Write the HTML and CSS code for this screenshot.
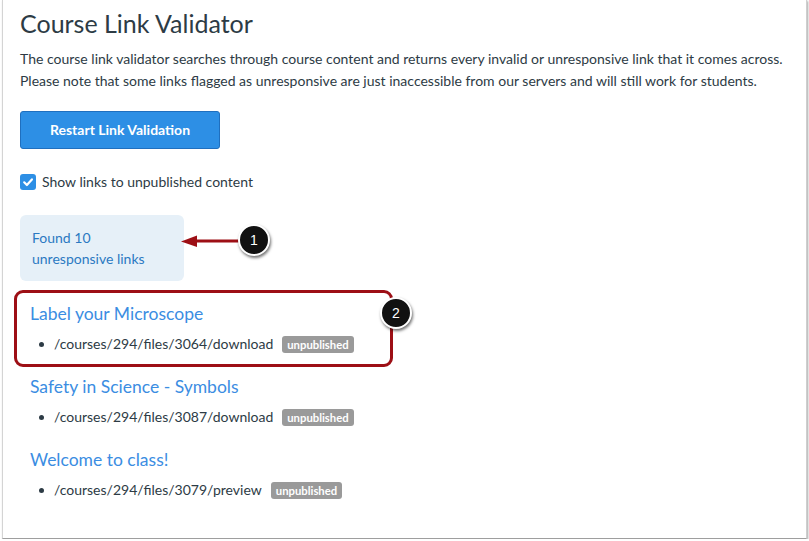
FILE: index.html
```html
<!DOCTYPE html>
<html lang="en">
<head>
<meta charset="utf-8">
<title>Course Link Validator</title>
<link rel="stylesheet" href="styles.css">
</head>
<body>
<div class="frame">
  <h1 class="title">Course Link Validator</h1>
  <p class="intro">The course link validator searches through course content and returns every invalid or unresponsive link that it comes across. Please note that some links flagged as unresponsive are just inaccessible from our servers and will still work for students.</p>
  <button class="btn" type="button">Restart Link Validation</button>
  <label class="check-row">
    <span class="checkbox"><svg viewBox="0 0 16 16" width="16" height="16"><path d="M4.2 8.3 L6.9 11 L11.9 5.4" fill="none" stroke="#fff" stroke-width="2.2" stroke-linecap="round" stroke-linejoin="round"/></svg></span>
    <span class="check-label">Show links to unpublished content</span>
  </label>
  <div class="found">Found 10<br>unresponsive links</div>

  <div class="results">
    <section class="group group-highlight">
      <a class="group-title" href="#">Label your Microscope</a>
      <ul class="links">
        <li><span class="path">/courses/294/files/3064/download</span><span class="badge">unpublished</span></li>
      </ul>
    </section>
    <section class="group">
      <a class="group-title" href="#">Safety in Science - Symbols</a>
      <ul class="links">
        <li><span class="path">/courses/294/files/3087/download</span><span class="badge">unpublished</span></li>
      </ul>
    </section>
    <section class="group">
      <a class="group-title" href="#">Welcome to class!</a>
      <ul class="links">
        <li><span class="path">/courses/294/files/3079/preview</span><span class="badge">unpublished</span></li>
      </ul>
    </section>
  </div>

  <svg class="arrow" viewBox="0 0 62 18" width="62" height="18">
    <line x1="14" y1="9" x2="62" y2="9" stroke="#9d0f15" stroke-width="3"/>
    <polygon points="0,9.5 16,3.5 16,15" fill="#9d0f15"/>
  </svg>
  <div class="step step-1">1</div>
  <div class="step step-2">2</div>
</div>
</body>
</html>
```

FILE: styles.css
```css
html, body {
  margin: 0;
  padding: 0;
  background: #ffffff;
}

body {
  font-family: Lato, "Open Sans", "Liberation Sans", sans-serif;
  color: #2d3b45;
}

.frame {
  position: relative;
  box-sizing: border-box;
  width: 805px;
  height: 539px;
  margin-left: 2px;
  padding: 8px 17px 0;
  border-left: 1px solid #d4d4d4;
  border-right: 1px solid #cfcfcf;
  border-bottom: 1px solid #9e9e9e;
  box-shadow: 1px 1px 2px rgba(0, 0, 0, 0.35);
  background: #fff;
}

.title {
  margin: 0;
  font-size: 25px;
  line-height: 31px;
  font-weight: 400;
  color: #2d3b45;
}

.intro {
  margin: 9px 0 0;
  font-size: 14px;
  line-height: 22px;
  color: #2d3b45;
}

.btn {
  display: block;
  box-sizing: border-box;
  width: 200px;
  height: 38px;
  margin-top: 19px;
  padding: 0;
  border: 1px solid #1f6fbf;
  border-radius: 3px;
  background: #2d8fe5;
  color: #fff;
  font-family: Lato, "Open Sans", "Liberation Sans", sans-serif;
  font-size: 14px;
  font-weight: 700;
  line-height: 16px;
}

.check-row {
  display: flex;
  align-items: center;
  gap: 6px;
  margin-top: 25px;
  height: 16px;
}

.checkbox {
  display: block;
  width: 16px;
  height: 16px;
  border-radius: 3px;
  background: #2d8fe5;
}

.checkbox svg {
  display: block;
}

.check-label {
  font-size: 14px;
  line-height: 16px;
  color: #2d3b45;
}

.found {
  box-sizing: border-box;
  width: 164px;
  height: 66px;
  margin-top: 25px;
  padding: 12px 12px;
  border-radius: 6px;
  background: #e6f0f8;
  color: #2b79c2;
  font-size: 14px;
  line-height: 21px;
}

.group {
  margin-top: 20px;
}

.group-highlight {
  position: relative;
}

.group-highlight::after {
  content: "";
  position: absolute;
  left: -6px;
  top: -11px;
  width: 379px;
  height: 77px;
  box-sizing: border-box;
  border: 3px solid #9d0f15;
  border-radius: 9px;
}

.group-title {
  display: block;
  padding: 1px 0 0 10px;
  font-size: 17.5px;
  line-height: 24px;
  color: #3b8de2;
  text-decoration: none;
}

.links {
  margin: 7px 0 0;
  padding: 0;
  list-style: none;
}

.links li {
  display: flex;
  align-items: center;
  height: 21px;
  font-size: 14px;
  line-height: 21px;
  color: #2d3b45;
}

.links li::before {
  content: "";
  display: block;
  width: 5px;
  height: 5px;
  margin: 1px 10px 0 19px;
  border-radius: 50%;
  background: #2d3b45;
}

.badge {
  display: inline-block;
  margin-left: 9px;
  margin-top: 1px;
  padding: 0 5px;
  height: 17px;
  border-radius: 3px;
  background: #9a9a9a;
  color: #fff;
  font-size: 11.3px;
  font-weight: 700;
  line-height: 17px;
}

.arrow {
  position: absolute;
  left: 178px;
  top: 232px;
}

.step {
  position: absolute;
  box-sizing: border-box;
  width: 32px;
  height: 32px;
  border: 2px solid #fff;
  border-radius: 50%;
  background: #111;
  color: #fff;
  font-family: "Liberation Sans", Arial, sans-serif;
  font-size: 14px;
  line-height: 28px;
  text-align: center;
  box-shadow: 1px 2px 3px rgba(0, 0, 0, 0.55);
}

.step-1 {
  left: 235px;
  top: 224px;
}

.step-2 {
  left: 377px;
  top: 297px;
}
```
